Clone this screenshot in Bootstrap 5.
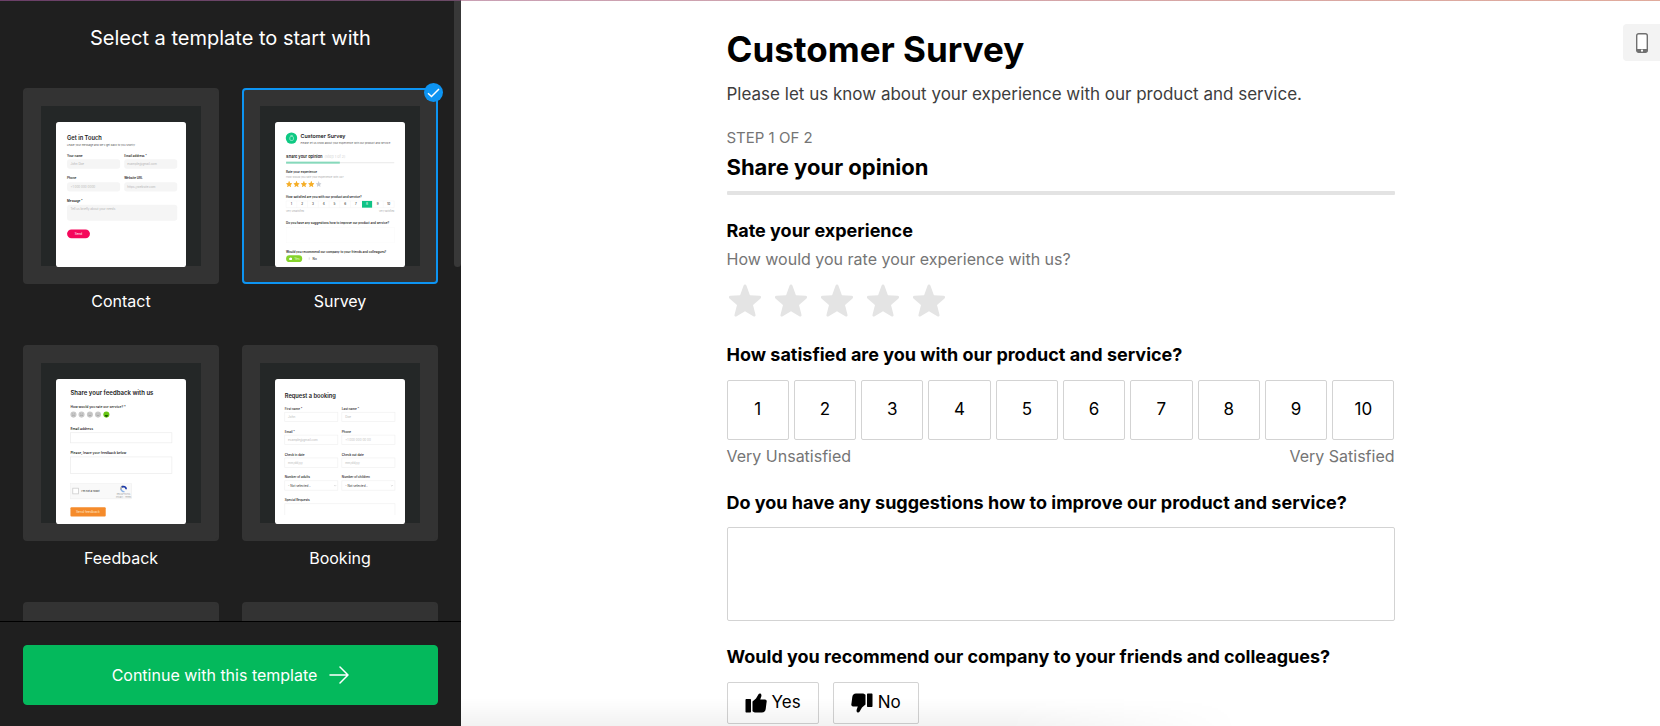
<!DOCTYPE html>
<html lang="en">
<head>
<meta charset="utf-8">
<meta name="viewport" content="width=device-width, initial-scale=1">
<title>Select a template</title>
<link href="https://cdn.jsdelivr.net/npm/bootstrap@5.3.0/dist/css/bootstrap.min.css" rel="stylesheet">
<style>
  body { font-family: Inter, "Liberation Sans", sans-serif; color: #000; }
  .top-line { height: 1px; background: linear-gradient(90deg, #6b3f68 0, #6b4a66 461px, #c9a0b4 461px, #e0ab9c 100%); }
  .panes { min-height: 0; }

  /* template picker */
  .picker { width: 461px; background: #1f1f1f; color: #fff; }
  .picker-title { font-size: 20px; line-height: 28px; margin: 23px 0 36px; font-weight: 400; }
  .picker-scroll { padding: 0 23px; min-height: 0; }
  .scroll-thumb { width: 7px; height: 266px; background: #383838; border-radius: 0 0 4px 4px; }
  .tile-grid { display: grid; grid-template-columns: 1fr 1fr; column-gap: 23px; row-gap: 32px; }
  .tile { cursor: pointer; }
  .tile-frame { height: 196px; background: #333; border: 2px solid #333; border-radius: 4px; padding: 16px; }
  .tile-stage { background: #242727; padding: 16px 15px 0; height: 160px; }
  .tile-name { font-size: 16px; line-height: 24px; margin-top: 5px; }
  .btn-check:checked + .tile .tile-frame { border-color: #0d94f2; }
  .tick { width: 19px; height: 19px; background: #0d94f2; top: -5px; right: -5px; }
  .picker-foot { border-top: 1px solid #000; padding: 23px 23px 21px; background: #1f1f1f; }
  .btn-go { --bs-btn-color: #fff; --bs-btn-bg: #04b95c; --bs-btn-hover-bg: #03a852; --bs-btn-hover-color: #fff; --bs-btn-border-color: #04b95c; --bs-btn-border-radius: 4px; height: 60px; font-size: 16px; }

  /* form preview */
  .survey { max-width: 668px; padding-top: 24px; }
  .survey h1 { font-size: 35px; line-height: 48px; font-weight: 700; margin-bottom: 9px; }
  .lead-in { font-size: 17px; line-height: 24px; color: #3d3d3d; margin-bottom: 20px; }
  .hint { font-size: 16px; line-height: 24px; color: #757575; }
  .step { font-size: 15px; line-height: 24px; color: #757575; }
  .survey h2 { font-size: 22px; line-height: 32px; font-weight: 700; margin: 1px 0 8px; }
  .step-bar { --bs-progress-height: 4px; --bs-progress-bg: #e3e3e3; --bs-progress-border-radius: 1px; margin-bottom: 24px; }
  .question { font-size: 18px; line-height: 24px; font-weight: 700; }
  .stars { gap: 10px; margin: 12px 0 24px; }
  .stars label { width: 36px; height: 36px; cursor: pointer; }
  .box { --bs-btn-color: #000; --bs-btn-border-color: #d3d3d3; --bs-btn-border-radius: 2px; --bs-btn-bg: #fff; --bs-btn-font-size: 17px; --bs-btn-active-bg: #e3e3e3; --bs-btn-active-color: #000; --bs-btn-active-border-color: #999; }
  .scale-row { gap: 5px; margin-top: 13px; }
  .scale-row .box { height: 60px; }
  .scale-ends { margin: 4px 0 23px; }
  .notes { height: 94px; border-color: #d3d3d3; border-radius: 2px; margin-top: 12px; resize: none; }
  .answer-row { gap: 14px; margin-top: 13px; }
  .answer-row .box { height: 42px; padding: 0 17px; gap: 5px; }
  .phone-btn { top: 23px; right: 0; width: 37px; height: 37px; background: #f3f3f3; border-radius: 4px 0 0 4px; }
  .fade-foot { height: 28px; width: 780px; bottom: 0; left: 0; background: linear-gradient(0deg, rgba(0,0,0,.05), rgba(0,0,0,0)); -webkit-mask-image: linear-gradient(90deg, #000 70%, transparent); mask-image: linear-gradient(90deg, #000 70%, transparent); pointer-events: none; }
</style>
</head>
<body>
<svg class="d-none" aria-hidden="true">
  <symbol id="star" viewBox="0 0 36 36"><path d="M18 1.500c.8 0 1.200.6 1.500 1.300l3.400 9.500 9.700.5c1.500.1 2 1.700.9 2.700l-7.500 6.500 2.500 9.800c.4 1.500-.9 2.300-2.200 1.500L18 28.200l-8.300 5.100c-1.300.8-2.600 0-2.200-1.500l2.500-9.800L2.500 15.500c-1.100-1-.6-2.600.9-2.700l9.700-.5 3.400-9.500c.3-.7.7-1.300 1.500-1.300z"/></symbol>
  <symbol id="thumb" viewBox="0 0 22 20"><path d="M1.500 6H5c.6 0 1 .4 1 1v11.500c0 .6-.4 1-1 1H1.500c-.6 0-1-.4-1-1V7c0-.6.400-1 1-1zM7.500 8.500 11 5.500 13.500 1.200C14 .4 15.300.2 16 1c.6.8.5 1.900.2 2.800L15.200 6.500H20c1 0 1.800.9 1.700 1.900l-.3 2.200-.7 5.400c-.3 2.200-1.500 3.500-3.700 3.500H11c-1.500 0-2.500-.4-3.500-1.300z"/></symbol>
</svg>

<div class="vh-100 d-flex flex-column overflow-hidden">
  <div class="top-line flex-shrink-0"></div>
  <div class="panes d-flex flex-grow-1">

    <aside class="picker d-flex flex-column flex-shrink-0 position-relative">
      <div class="scroll-thumb position-absolute top-0 end-0"></div>
      <div class="picker-scroll flex-grow-1 overflow-hidden">
        <h2 class="picker-title text-center">Select a template to start with</h2>
        <div class="tile-grid text-center">
          <div>
            <input class="btn-check" type="radio" name="template" id="t-contact">
            <label class="tile d-block" for="t-contact">
              <div class="tile-frame"><div class="tile-stage">
                <svg class="d-block w-100" viewBox="0 0 387 432" text-anchor="start">
                  <rect width="387" height="432" rx="8" fill="#fff"/>
                  <text x="33" y="53" font-size="17" font-weight="600" fill="#222">Get in Touch</text>
                  <text x="33" y="71" font-size="8" fill="#555">Leave your message and we'll get back to you shortly.</text>
                  <g font-size="9" font-weight="600" fill="#222">
                    <text x="33" y="103">Your name</text><text x="203" y="103">Email address *</text>
                    <text x="33" y="171">Phone</text><text x="203" y="171">Website URL</text>
                    <text x="33" y="239">Message *</text>
                  </g>
                  <g fill="#f5f5f5">
                    <rect x="33" y="111" width="158" height="28" rx="8"/><rect x="203" y="111" width="158" height="28" rx="8"/>
                    <rect x="33" y="179" width="158" height="28" rx="8"/><rect x="203" y="179" width="158" height="28" rx="8"/>
                    <rect x="33" y="246" width="328" height="48" rx="8"/>
                  </g>
                  <g font-size="9" fill="#b5b5b5">
                    <text x="43" y="128">John Doe</text><text x="212" y="128">example@gmail.com</text>
                    <text x="43" y="196">+1 000 000 0000</text><text x="212" y="196">https://website.com</text>
                    <text x="43" y="263">Tell us briefly about your needs</text>
                  </g>
                  <rect x="33" y="320" width="68" height="26" rx="13" fill="#f5075b"/>
                  <text x="56" y="337" font-size="9" fill="#fff">Send</text>
                </svg>
              </div></div>
              <div class="tile-name">Contact</div>
            </label>
          </div>

          <div>
            <input class="btn-check" type="radio" name="template" id="t-survey" checked>
            <label class="tile d-block position-relative" for="t-survey">
              <span class="tick position-absolute rounded-circle d-flex align-items-center justify-content-center">
                <svg width="13" height="10" viewBox="0 0 13 10" fill="none" stroke="#fff" stroke-width="1.500"><path d="M1 5.200 4.500 8.500 12 1"/></svg>
              </span>
              <div class="tile-frame"><div class="tile-stage">
                <svg class="d-block w-100" viewBox="0 0 387 432" text-anchor="start">
                  <rect width="387" height="432" rx="8" fill="#fff"/>
                  <circle cx="49" cy="48" r="17" fill="#0ec983"/>
                  <rect x="44" y="43" width="11" height="12" rx="4" fill="none" stroke="#b9f3dc" stroke-width="2"/><path d="M46 40h7" stroke="#b9f3dc" stroke-width="2"/>
                  <text x="76" y="48" font-size="16" font-weight="600" fill="#222">Customer Survey</text>
                  <text x="76" y="65" font-size="8" fill="#555">Please let us know about your experience with our product and service.</text>
                  <text x="33" y="107" font-size="12" font-weight="600" fill="#222">Share your opinion</text>
                  <text x="147" y="106" font-size="11" fill="#d5d5d5">(Step 1 of 2)</text>
                  <rect x="33" y="119" width="322" height="4" fill="#eee"/><rect x="33" y="118" width="160" height="6" fill="#86d9bb"/>
                  <text x="33" y="153" font-size="9" font-weight="600" fill="#222">Rate your experience</text>
                  <text x="33" y="166" font-size="8" fill="#aaa">How would you rate your experience with us?</text>
                  <g fill="#f5ae28"><use href="#star" x="32" y="175" width="20" height="20"/><use href="#star" x="54" y="175" width="20" height="20"/><use href="#star" x="76" y="175" width="20" height="20"/><use href="#star" x="98" y="175" width="20" height="20"/></g>
                  <use href="#star" x="121" y="176" width="18" height="18" fill="#c8ccd4"/>
                  <text x="33" y="226" font-size="9" font-weight="600" fill="#222">How satisfied are you with our product and service?</text>
                  <path d="M33 235h322v20H33zM65 235v20M97 235v20M129 235v20M161 235v20M193 235v20M225 235v20M290 235v20M322 235v20" fill="none" stroke="#f1f1f1"/>
                  <rect x="259" y="235" width="30" height="20" fill="#0fc385"/>
                  <g font-size="9" font-weight="500" fill="#333" text-anchor="middle">
                    <text x="49" y="248">1</text><text x="81" y="248">2</text><text x="113" y="248">3</text><text x="145" y="248">4</text><text x="177" y="248">5</text><text x="209" y="248">6</text><text x="241" y="248">7</text><text x="274" y="248" fill="#fff">8</text><text x="306" y="248">9</text><text x="338" y="248">10</text>
                  </g>
                  <text x="33" y="268" font-size="7" fill="#aaa">Very unsatisfied</text><text x="355" y="268" font-size="7" fill="#aaa" text-anchor="end">Very satisfied</text>
                  <text x="33" y="305" font-size="9" font-weight="600" fill="#222">Do you have any suggestions how to improve our product and service?</text>
                  <rect x="33" y="314" width="322" height="46" fill="none" stroke="#f6f6f6"/>
                  <text x="33" y="390" font-size="9" font-weight="600" fill="#222">Would you recommend our company to your friends and colleagues?</text>
                  <rect x="33" y="397" width="48" height="20" rx="10" fill="#85d32b"/><use href="#thumb" x="41" y="402" width="10" height="9" fill="#fff"/>
                  <text x="58" y="410" font-size="9" fill="#e9ffd0">Yes</text>
                  <text x="112" y="410" font-size="9" font-weight="500" fill="#333">No</text><path d="M102 403v7" stroke="#999"/>
                </svg>
              </div></div>
              <div class="tile-name">Survey</div>
            </label>
          </div>

          <div>
            <input class="btn-check" type="radio" name="template" id="t-feedback">
            <label class="tile d-block" for="t-feedback">
              <div class="tile-frame"><div class="tile-stage">
                <svg class="d-block w-100" viewBox="0 0 387 432" text-anchor="start">
                  <rect width="387" height="432" rx="8" fill="#fff"/>
                  <text x="43" y="48" font-size="18" font-weight="600" fill="#222">Share your feedback with us</text>
                  <g font-size="10" font-weight="600" fill="#333">
                    <text x="43" y="87">How would you rate our service? *</text>
                    <text x="43" y="152">Email address</text><text x="43" y="224">Please, leave your feedback below</text>
                  </g>
                  <g fill="#c9c9c9"><circle cx="52" cy="106" r="9"/><circle cx="76" cy="106" r="9"/><circle cx="101" cy="106" r="9"/><circle cx="125" cy="106" r="9"/></g>
                  <circle cx="150" cy="106" r="9" fill="#67c613"/>
                  <g stroke="#999" stroke-width="2" fill="none"><path d="M48 104h2m4 0h2m-8 6q4-4 8 0M72 104h2m4 0h2m-8 5q4-2 8 0M97 104h2m4 0h2m-8 5h8M121 104h2m4 0h2m-8 4q4 3 8 0"/></g>
                  <path d="M145 107h10q-1 6-5 6t-5-6z" fill="#1f5a00"/>
                  <g fill="none" stroke="#ebebeb" stroke-width="2"><rect x="43" y="160" width="302" height="30"/><rect x="43" y="232" width="302" height="49"/></g>
                  <rect x="43" y="311" width="182" height="46" fill="#f9f9f9" stroke="#e8e8e8"/>
                  <rect x="50" y="325" width="17" height="17" fill="#fff" stroke="#c4c4c4" stroke-width="2"/>
                  <text x="75" y="337" font-size="8" fill="#222">I'm not a robot</text>
                  <path d="M194 330a8 8 0 0 1 6-11" fill="none" stroke="#aaa" stroke-width="5"/><path d="M196 322a8 8 0 0 1 13 6" fill="none" stroke="#1c3aa9" stroke-width="5"/><path d="M194 328a8 8 0 0 0 10 7" fill="none" stroke="#8db4e8" stroke-width="4"/>
                  <text x="201" y="346" font-size="7" fill="#999" text-anchor="middle">reCAPTCHA</text><text x="201" y="353" font-size="6" fill="#999" text-anchor="middle">Privacy - Terms</text>
                  <rect x="43" y="382" width="105" height="27" rx="3" fill="#f58b2b"/>
                  <text x="95" y="399" font-size="10" fill="#ffe3c8" text-anchor="middle">Send feedback</text>
                </svg>
              </div></div>
              <div class="tile-name">Feedback</div>
            </label>
          </div>

          <div>
            <input class="btn-check" type="radio" name="template" id="t-booking">
            <label class="tile d-block" for="t-booking">
              <div class="tile-frame"><div class="tile-stage">
                <svg class="d-block w-100" viewBox="0 0 387 432" text-anchor="start">
                  <rect width="387" height="432" rx="8" fill="#fff"/>
                  <text x="29" y="56" font-size="17" font-weight="600" fill="#222">Request a booking</text>
                  <g font-size="9" font-weight="600" fill="#333">
                    <text x="29" y="92">First name *</text><text x="199" y="92">Last name *</text>
                    <text x="29" y="160">Email *</text><text x="199" y="160">Phone</text>
                    <text x="29" y="228">Check in date</text><text x="199" y="228">Check out date</text>
                    <text x="29" y="296">Number of adults</text><text x="199" y="296">Number of children</text>
                    <text x="29" y="364">Special Requests</text>
                  </g>
                  <g fill="none" stroke="#f0f0f0" stroke-width="2">
                    <rect x="29" y="99" width="158" height="28"/><rect x="199" y="99" width="158" height="28"/>
                    <rect x="29" y="167" width="158" height="28"/><rect x="199" y="167" width="158" height="28"/>
                    <rect x="29" y="235" width="158" height="28"/><rect x="199" y="235" width="158" height="28"/>
                    <rect x="29" y="303" width="158" height="28"/><rect x="199" y="303" width="158" height="28"/>
                    <path d="M29 405v-34h328v34"/>
                  </g>
                  <g font-size="9" fill="#bbb">
                    <text x="39" y="117">John</text><text x="209" y="117">Doe</text>
                    <text x="39" y="185">example@gmail.com</text><text x="209" y="185">+1 000 000 00 00</text>
                    <text x="39" y="253">mm/dd/yy</text><text x="209" y="253">mm/dd/yy</text>
                    <text x="39" y="321" fill="#333">- Not selected -</text><text x="209" y="321" fill="#333">- Not selected -</text>
                  </g>
                  <path d="m176 316 3 3 3-3M345 316l3 3 3-3" fill="none" stroke="#999"/>
                </svg>
              </div></div>
              <div class="tile-name">Booking</div>
            </label>
          </div>

          <div class="tile-frame"></div>
          <div class="tile-frame"></div>
        </div>
      </div>
      <div class="picker-foot">
        <button type="button" class="btn btn-go w-100 d-flex align-items-center justify-content-center gap-2">
          Continue with this template
          <svg class="ms-1" width="20" height="18" viewBox="0 0 20 18" fill="none" stroke="currentColor" stroke-width="1.500" stroke-linecap="round" stroke-linejoin="round"><path d="M1 9h18M11 1l8 8-8 8"/></svg>
        </button>
      </div>
    </aside>

    <main class="flex-grow-1 position-relative bg-white overflow-hidden">
      <button type="button" class="phone-btn btn border-0 p-0 position-absolute d-flex align-items-center justify-content-center" aria-label="Mobile preview">
        <svg width="12" height="20" viewBox="0 0 12 20"><rect x=".7" y=".7" width="10.600" height="18.600" rx="2" fill="#fff" stroke="#707070" stroke-width="1.400"/><path d="M.7 16h10.600v1.500a2 2 0 0 1-2 1.800H2.700a2 2 0 0 1-2-1.800z" fill="#707070"/><circle cx="6" cy="17.700" r="1.100" fill="#fff"/></svg>
      </button>
      <form class="survey mx-auto">
        <h1>Customer Survey</h1>
        <p class="lead-in">Please let us know about your experience with our product and service.</p>
        <div class="step">STEP 1 OF 2</div>
        <h2>Share your opinion</h2>
        <div class="progress step-bar" role="progressbar" aria-label="Progress"></div>

        <div class="question">Rate your experience</div>
        <div class="hint mt-1">How would you rate your experience with us?</div>
        <div class="stars d-flex">
          <input class="btn-check" type="radio" name="stars" id="s1"><label for="s1" aria-label="1 star"><svg width="36" height="36" fill="#e4e4e4"><use href="#star"/></svg></label>
          <input class="btn-check" type="radio" name="stars" id="s2"><label for="s2" aria-label="2 stars"><svg width="36" height="36" fill="#e4e4e4"><use href="#star"/></svg></label>
          <input class="btn-check" type="radio" name="stars" id="s3"><label for="s3" aria-label="3 stars"><svg width="36" height="36" fill="#e4e4e4"><use href="#star"/></svg></label>
          <input class="btn-check" type="radio" name="stars" id="s4"><label for="s4" aria-label="4 stars"><svg width="36" height="36" fill="#e4e4e4"><use href="#star"/></svg></label>
          <input class="btn-check" type="radio" name="stars" id="s5"><label for="s5" aria-label="5 stars"><svg width="36" height="36" fill="#e4e4e4"><use href="#star"/></svg></label>
        </div>

        <div class="question">How satisfied are you with our product and service?</div>
        <div class="scale-row d-flex">
          <input class="btn-check" type="radio" name="scale" id="n1"><label class="btn box flex-fill w-100 p-0 d-flex align-items-center justify-content-center" for="n1">1</label>
          <input class="btn-check" type="radio" name="scale" id="n2"><label class="btn box flex-fill w-100 p-0 d-flex align-items-center justify-content-center" for="n2">2</label>
          <input class="btn-check" type="radio" name="scale" id="n3"><label class="btn box flex-fill w-100 p-0 d-flex align-items-center justify-content-center" for="n3">3</label>
          <input class="btn-check" type="radio" name="scale" id="n4"><label class="btn box flex-fill w-100 p-0 d-flex align-items-center justify-content-center" for="n4">4</label>
          <input class="btn-check" type="radio" name="scale" id="n5"><label class="btn box flex-fill w-100 p-0 d-flex align-items-center justify-content-center" for="n5">5</label>
          <input class="btn-check" type="radio" name="scale" id="n6"><label class="btn box flex-fill w-100 p-0 d-flex align-items-center justify-content-center" for="n6">6</label>
          <input class="btn-check" type="radio" name="scale" id="n7"><label class="btn box flex-fill w-100 p-0 d-flex align-items-center justify-content-center" for="n7">7</label>
          <input class="btn-check" type="radio" name="scale" id="n8"><label class="btn box flex-fill w-100 p-0 d-flex align-items-center justify-content-center" for="n8">8</label>
          <input class="btn-check" type="radio" name="scale" id="n9"><label class="btn box flex-fill w-100 p-0 d-flex align-items-center justify-content-center" for="n9">9</label>
          <input class="btn-check" type="radio" name="scale" id="n10"><label class="btn box flex-fill w-100 p-0 d-flex align-items-center justify-content-center" for="n10">10</label>
        </div>
        <div class="hint scale-ends d-flex justify-content-between"><span>Very Unsatisfied</span><span>Very Satisfied</span></div>

        <label class="question d-block" for="notes">Do you have any suggestions how to improve our product and service?</label>
        <textarea class="form-control notes mb-4" id="notes"></textarea>

        <div class="question">Would you recommend our company to your friends and colleagues?</div>
        <div class="answer-row d-flex">
          <input class="btn-check" type="radio" name="rec" id="yes">
          <label class="btn box d-flex align-items-center" for="yes"><svg width="22" height="20"><use href="#thumb"/></svg>Yes</label>
          <input class="btn-check" type="radio" name="rec" id="no">
          <label class="btn box d-flex align-items-center" for="no"><svg width="22" height="20" viewBox="0 0 22 20"><use href="#thumb" width="22" height="20" transform="rotate(180 11 10)"/></svg>No</label>
        </div>
      </form>
      <div class="fade-foot position-absolute"></div>
    </main>
  </div>
</div>
<script src="https://cdn.jsdelivr.net/npm/bootstrap@5.3.0/dist/js/bootstrap.bundle.min.js"></script>
</body>
</html>
